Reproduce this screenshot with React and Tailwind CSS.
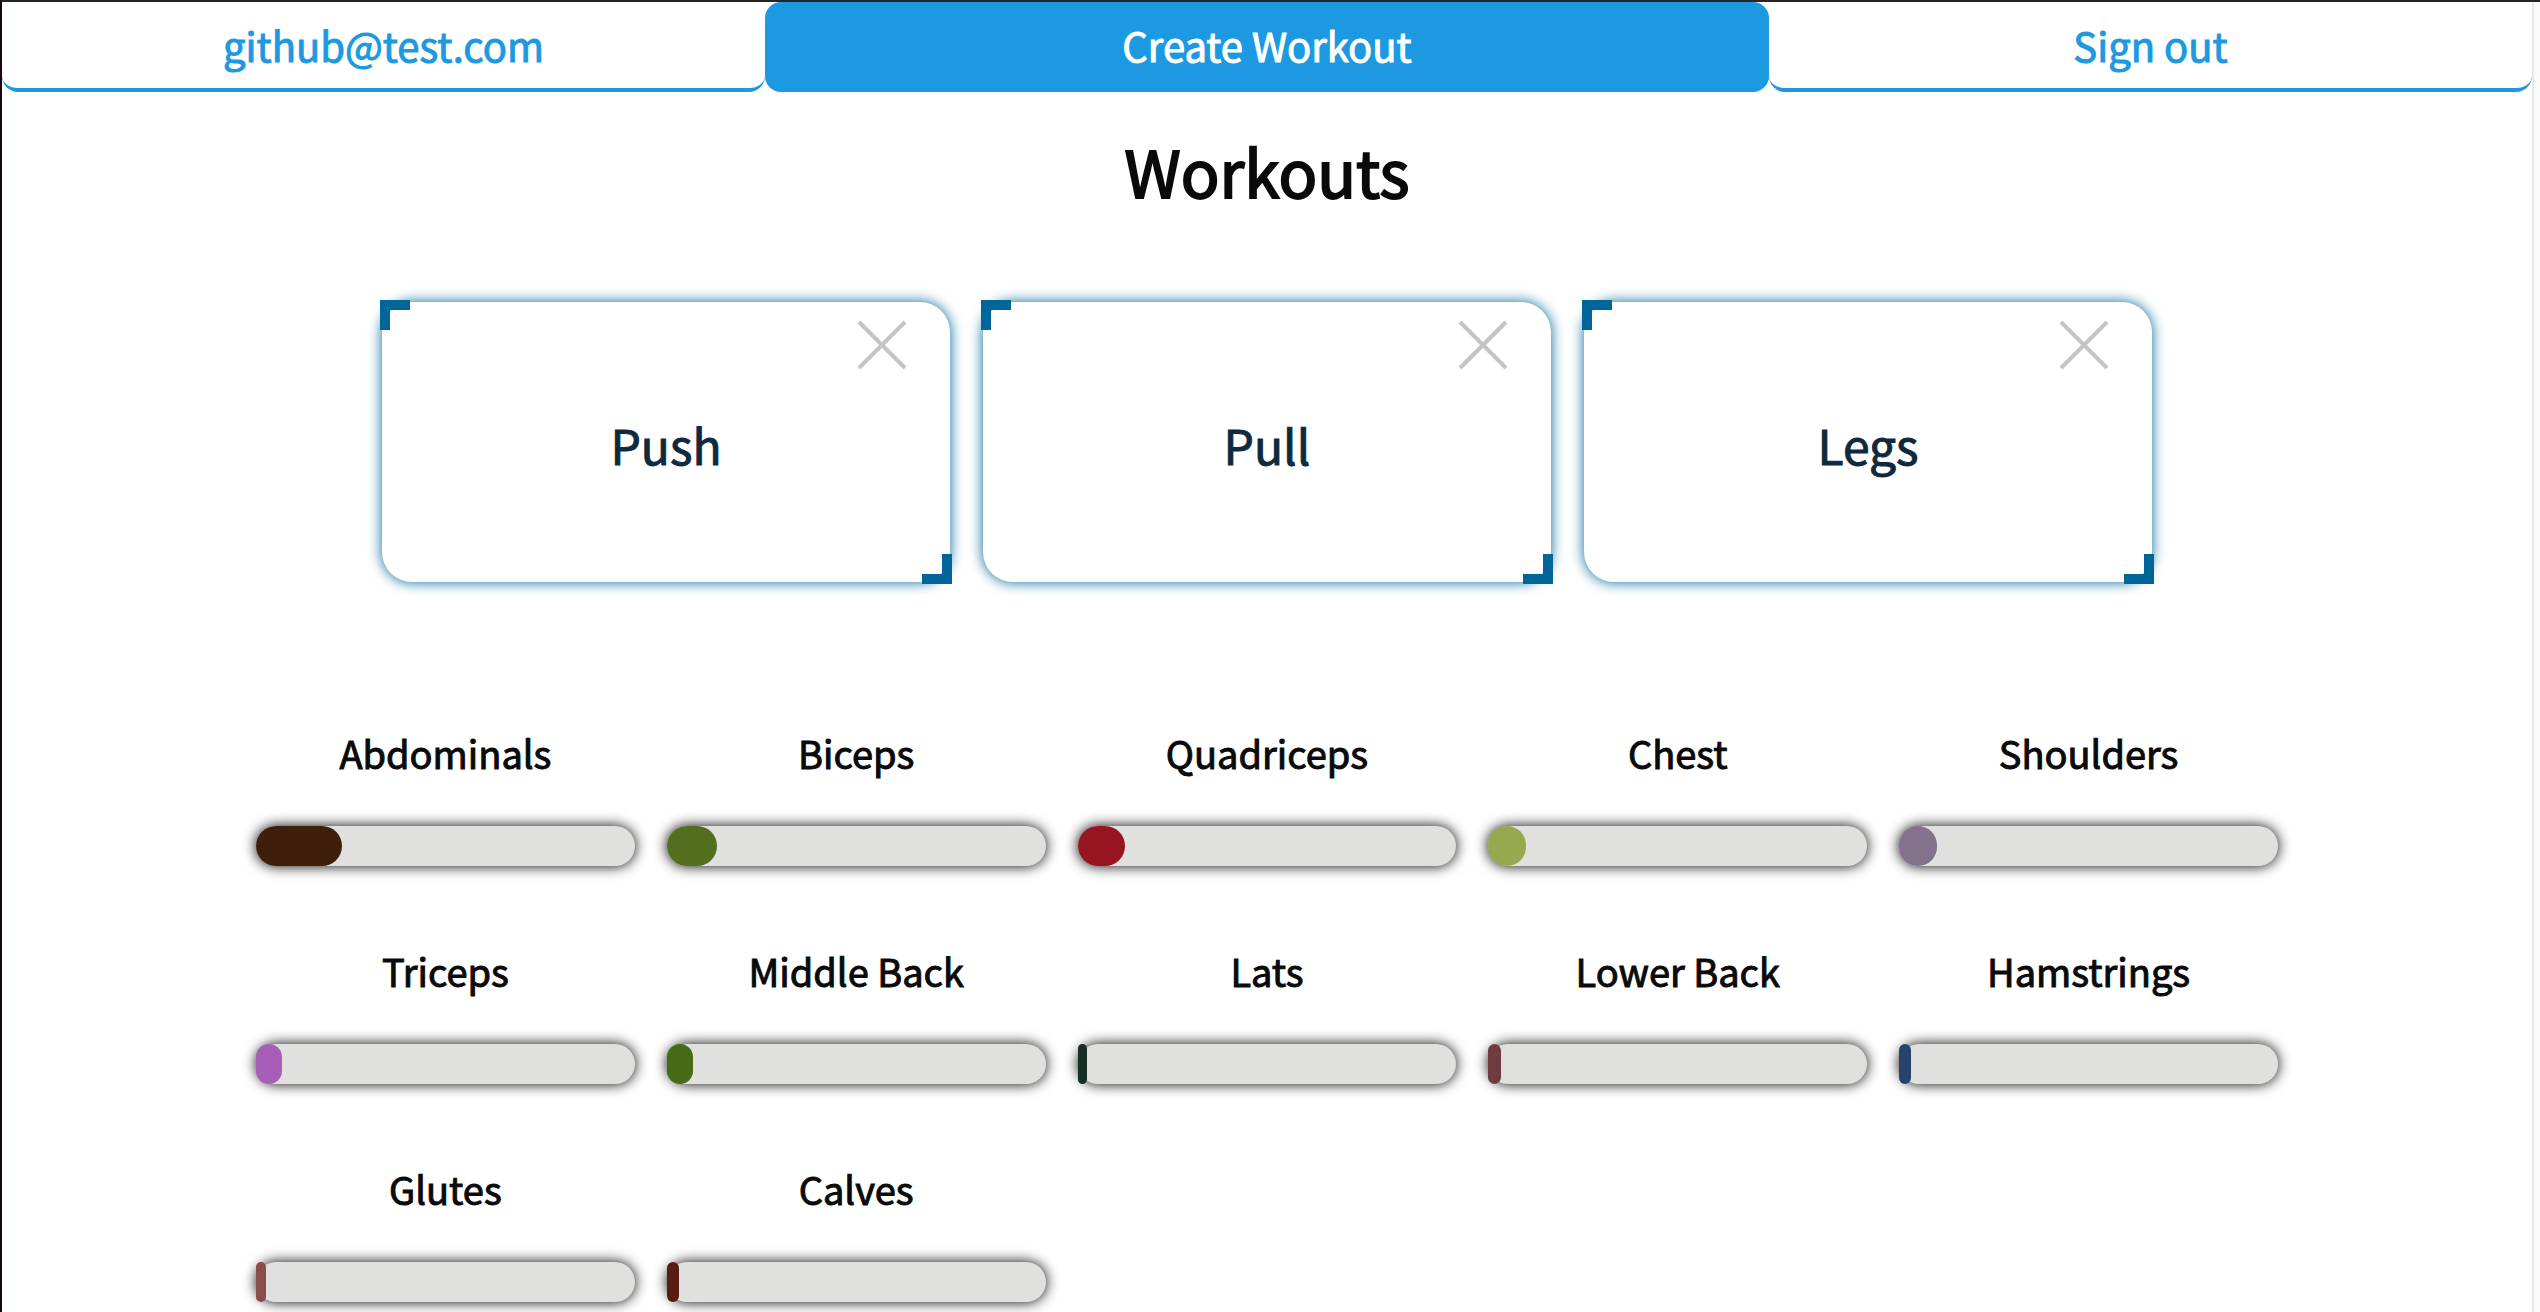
const workouts = ['Push', 'Pull', 'Legs'];

const muscles = [
  { name: 'Abdominals', color: '#3e1f0b', percent: 22.7 },
  { name: 'Biceps', color: '#536e1e', percent: 13.2 },
  { name: 'Quadriceps', color: '#971521', percent: 12.6 },
  { name: 'Chest', color: '#97a94e', percent: 10 },
  { name: 'Shoulders', color: '#83718e', percent: 10 },
  { name: 'Triceps', color: '#a65eb6', percent: 6.8 },
  { name: 'Middle Back', color: '#466a16', percent: 6.8 },
  { name: 'Lats', color: '#172f24', percent: 2.6 },
  { name: 'Lower Back', color: '#703b40', percent: 3.2 },
  { name: 'Hamstrings', color: '#27426d', percent: 3.2 },
  { name: 'Glutes', color: '#894e4b', percent: 2.6 },
  { name: 'Calves', color: '#5a1c12', percent: 3.2 },
];

function NavBar() {
  return (
    <nav className="grid grid-cols-[19fr_25fr_19fr] text-[40px] leading-[60px] text-[#1c99e1]">
      <button type="button" className="h-[90px] rounded-2xl border-b-4 border-[#1c99e1] [-webkit-text-stroke:1px_#1c99e1]">
        github@test.com
      </button>
      <button type="button" className="h-[90px] rounded-2xl border-b-4 border-[#1c99e1] bg-[#1c99e1] text-white [-webkit-text-stroke:1px_#ffffff]">
        Create Workout
      </button>
      <button type="button" className="h-[90px] rounded-2xl border-b-4 border-[#1c99e1] [-webkit-text-stroke:1px_#1c99e1]">
        Sign out
      </button>
    </nav>
  );
}

function WorkoutCard({ name }) {
  return (
    <article className="relative flex h-[284px] items-center justify-center pt-1">
      <div className="absolute inset-0.5 rounded-[30px] bg-white shadow-[0_0_14px_#006699]" />
      <span className="absolute top-0 left-0 size-[30px] border-t-10 border-l-10 border-[#006699]" />
      <span className="absolute right-0 bottom-0 size-[30px] border-r-10 border-b-10 border-[#006699]" />
      <button type="button" aria-label={`Delete ${name}`} className="absolute top-5 right-[45px] size-[50px]">
        <svg viewBox="0 0 50 50" fill="none" stroke="#c4c4c4" strokeWidth="4" className="size-full">
          <path d="M2 2 48 48M48 2 2 48" />
        </svg>
      </button>
      <h2 className="relative text-[48px] leading-[72px] text-[#10293e] [-webkit-text-stroke:1px_#10293e]">{name}</h2>
    </article>
  );
}

function MuscleStat({ name, color, percent }) {
  return (
    <div>
      <h3 className="text-center text-[38px] leading-[58px] [-webkit-text-stroke:1px_#0a0a0a]">{name}</h3>
      <div
        role="progressbar"
        aria-label={name}
        aria-valuenow={percent}
        aria-valuemin={0}
        aria-valuemax={100}
        className="mt-11 h-10 rounded-[20px] bg-[#e0e0de] shadow-[0_0_14px_#000000]"
      >
        <div className="h-full rounded-[20px]" style={{ width: `${percent}%`, backgroundColor: color }} />
      </div>
    </div>
  );
}

export default function App() {
  return (
    <div className="flex min-h-screen border-t-2 border-l-2 border-t-[#262425] border-l-[#1c0410] bg-white font-['Noto_Sans_CJK_JP','Noto_Sans_CJK_SC',sans-serif] text-[#0a0a0a]">
      <div className="min-w-0 flex-1">
        <NavBar />
        <main>
          <h1 className="mt-[30px] text-center text-[64px] leading-[96px] [-webkit-text-stroke:2px_#0a0a0a]">Workouts</h1>
          <section aria-label="Workouts" className="mt-[82px] grid grid-cols-3 gap-[29px] px-[378px]">
            {workouts.map((name) => (
              <WorkoutCard key={name} name={name} />
            ))}
          </section>
          <section aria-label="Muscles" className="mt-[140px] grid grid-cols-5 gap-x-8 gap-y-[76px] px-[254px]">
            {muscles.map((muscle) => (
              <MuscleStat key={muscle.name} {...muscle} />
            ))}
          </section>
        </main>
      </div>
      <div className="w-2 border-l-2 border-[#e8e8e8] bg-[#fafafa]" />
    </div>
  );
}
